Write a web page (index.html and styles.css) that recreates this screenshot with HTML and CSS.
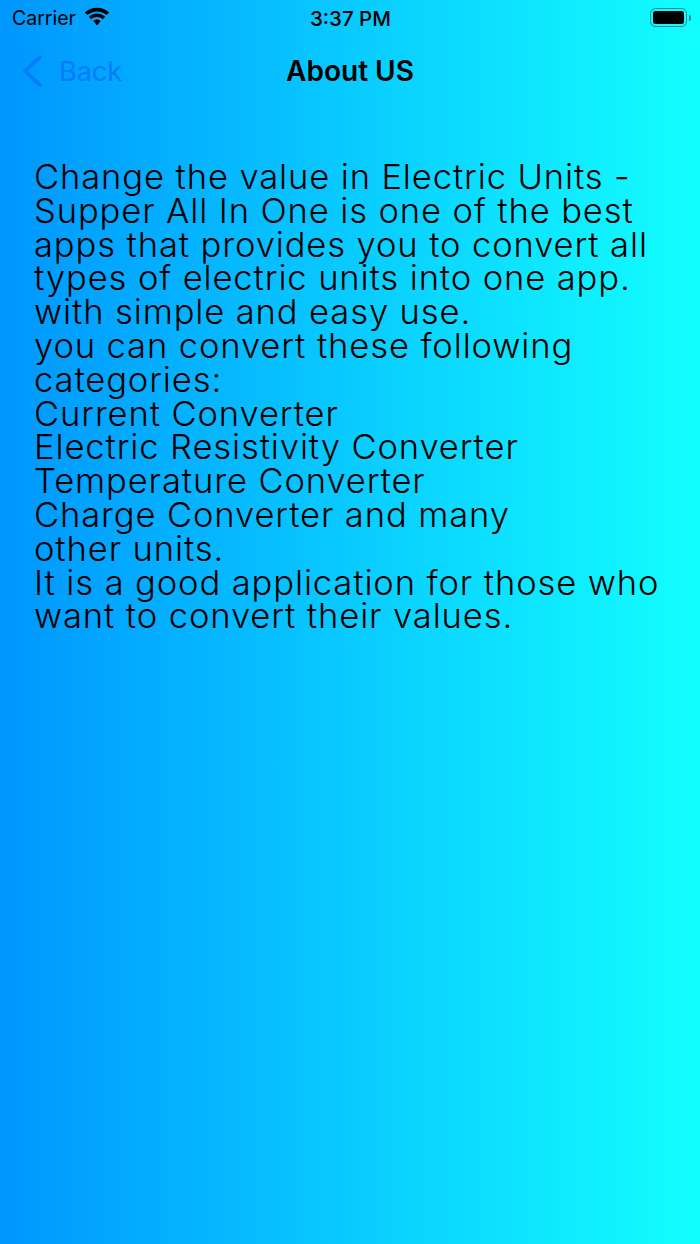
FILE: index.html
```html
<!DOCTYPE html>
<html lang="en">
<head>
    <meta charset="UTF-8">
    <meta name="viewport" content="width=device-width, initial-scale=1.0">
    <title>About US</title>
    <link rel="stylesheet" href="styles.css">
</head>
<body>
    <div class="status-bar">
        <div class="status-left">
            <span class="carrier">Carrier</span>
            <svg class="wifi" width="28" height="20" viewBox="0 0 26 19">
                <path d="M13 4.200c3.500 0 6.700 1.300 9.100 3.500l2.400-2.500C21.500 2.300 17.500.6 13 .6S4.500 2.300 1.500 5.200l2.400 2.500C6.300 5.500 9.500 4.200 13 4.200z"/>
                <path d="M13 9.600c2.100 0 4 .8 5.500 2.100l2.300-2.500C18.700 7.300 16 6.100 13 6.100s-5.700 1.200-7.800 3.100l2.300 2.500c1.500-1.300 3.400-2.100 5.500-2.100z"/>
                <path d="M13 11.800c-1.300 0-2.600.5-3.500 1.400l3.500 4.300 3.500-4.300c-.9-.9-2.200-1.400-3.500-1.400z"/>
            </svg>
        </div>
        <span class="clock">3:37 PM</span>
        <div class="battery">
            <div class="battery-body"><div class="battery-level"></div></div>
            <div class="battery-cap"></div>
        </div>
    </div>
    <div class="nav-bar">
        <div class="back">
            <svg width="22" height="34" viewBox="0 0 22 34">
                <path d="M19 3 L4 17 L19 31" fill="none" stroke="#007aff" stroke-width="3.6" stroke-linecap="round" stroke-linejoin="round"/>
            </svg>
            <span>Back</span>
        </div>
        <h1>About US</h1>
    </div>
    <p class="about-text">
        Change the value in Electric Units -<br>
        Supper All In One is one of the best<br>
        apps that provides you to convert all<br>
        types of electric units into one app.<br>
        with simple and easy use.<br>
        you can convert these following<br>
        categories:<br>
        Current Converter<br>
        Electric Resistivity Converter<br>
        Temperature Converter<br>
        Charge Converter and many<br>
        other units.<br>
        It is a good application for those who<br>
        want to convert their values.
    </p>
</body>
</html>
```

FILE: styles.css
```css
html, body {
    height: 100%;
}
body {
    margin: 0;
    height: 1244px;
    overflow: hidden;
    background: linear-gradient(to right, #0096ff, #12ffff);
    color: #000;
    font-family: 'Inter', 'Liberation Sans', sans-serif;
}
.status-bar {
    height: 36px;
    padding: 0 9px 0 12px;
    display: grid;
    grid-template-columns: 1fr auto 1fr;
    align-items: center;
}
.status-left {
    display: flex;
    align-items: center;
    gap: 7.500px;
}
.carrier {
    font-size: 19.500px;
}
.wifi {
    margin-top: -2px;
}
.clock {
    font-size: 20.500px;
    font-weight: 500;
    margin-left: -2px;
}
.battery {
    justify-self: end;
    display: flex;
    align-items: center;
    gap: 2px;
    margin-top: -1px;
}
.battery-body {
    box-sizing: border-box;
    width: 37px;
    height: 19px;
    padding: 2px;
    border: 1.5px solid #0a8c9c;
    border-radius: 5.500px;
}
.battery-level {
    height: 100%;
    background: #000;
    border-radius: 2.500px;
}
.battery-cap {
    width: 2px;
    height: 6px;
    background: #0a8c9c;
    border-radius: 0 2px 2px 0;
}
.nav-bar {
    position: relative;
    height: 70px;
    display: flex;
    align-items: center;
    justify-content: center;
}
.nav-bar h1 {
    margin: 0;
    font-size: 28px;
    font-weight: 600;
}
.back {
    position: absolute;
    left: 21px;
    top: 18px;
    display: flex;
    align-items: center;
    gap: 16px;
    color: #007aff;
    font-size: 27px;
}
.about-text {
    margin: 54px 0 0 34px;
    font-family: 'Inter', sans-serif;
    font-weight: 300;
    font-size: 34.500px;
    letter-spacing: .9px;
    line-height: 33.800px;
    white-space: nowrap;
}
```
